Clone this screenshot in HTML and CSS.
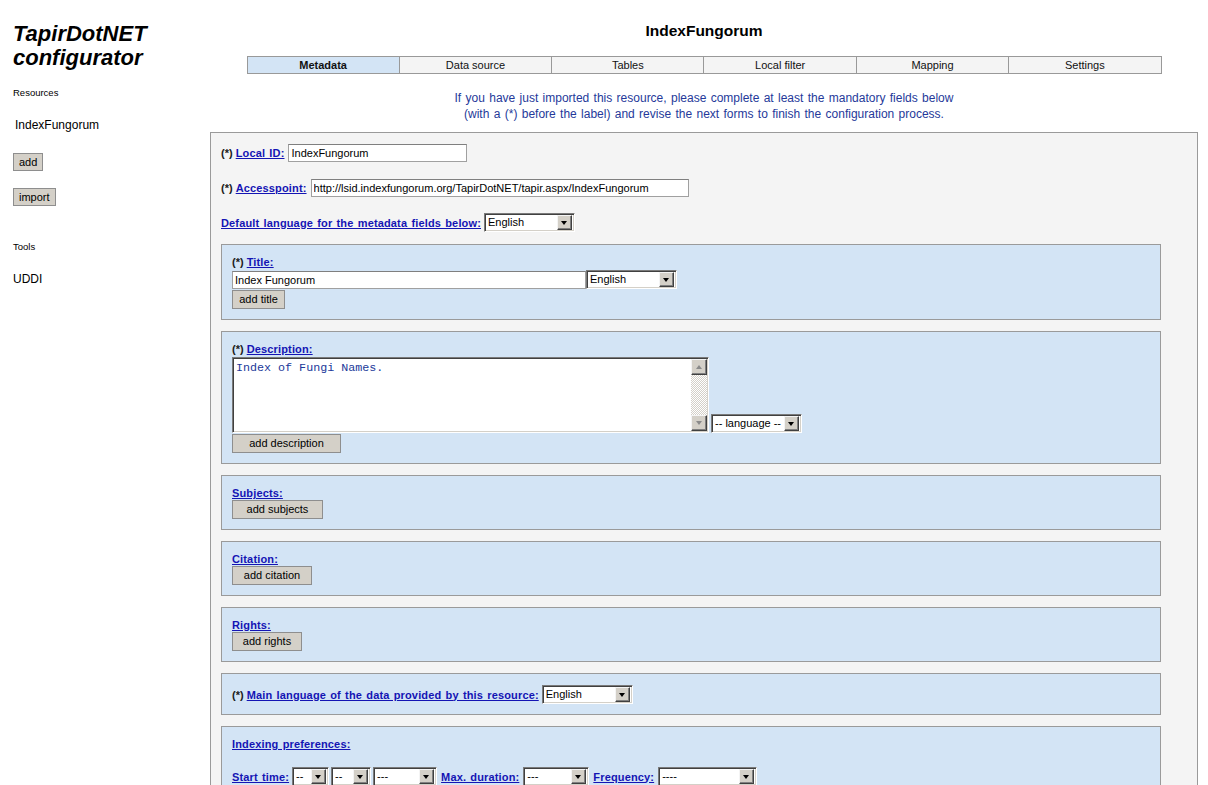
FILE: index.html
```html
<!DOCTYPE html>
<html>
<head>
<meta charset="utf-8">
<title>TapirDotNET configurator</title>
<link rel="stylesheet" href="styles.css">
</head>
<body>
<div class="page">
  <aside class="sidebar">
    <h1 class="app-title">TapirDotNET configurator</h1>
    <div class="side-heading">Resources</div>
    <div class="side-item side-item--res">IndexFungorum</div>
    <button class="btn btn--side">add</button>
    <button class="btn btn--side btn--import">import</button>
    <div class="side-heading side-heading--tools">Tools</div>
    <div class="side-item side-item--uddi">UDDI</div>
  </aside>

  <main class="main">
    <h2 class="res-title">IndexFungorum</h2>
    <nav class="tabs">
      <div class="tab tab--active">Metadata</div>
      <div class="tab">Data source</div>
      <div class="tab">Tables</div>
      <div class="tab">Local filter</div>
      <div class="tab">Mapping</div>
      <div class="tab">Settings</div>
    </nav>
    <p class="info">If you have just imported this resource, please complete at least the mandatory fields below<br>(with a (*) before the label) and revise the next forms to finish the configuration process.</p>

    <section class="panel">
      <div class="row row--first">
        <span class="req">(*)</span>&nbsp;<a class="lbl" href="#">Local ID:</a>
        <input class="txt txt--id" type="text" value="IndexFungorum">
      </div>
      <div class="row row--access">
        <span class="req">(*)</span>&nbsp;<a class="lbl" href="#">Accesspoint:</a>
        <input class="txt txt--access" type="text" value="http://lsid.indexfungorum.org/TapirDotNET/tapir.aspx/IndexFungorum">
      </div>
      <div class="row row--deflang">
        <a class="lbl" href="#">Default language for the metadata fields below:</a>
        <span class="sel sel--lang"><span class="sel-text">English</span><span class="sel-btn"></span></span>
      </div>

      <div class="box box--title">
        <div class="box-label"><span class="req">(*)</span> <a class="lbl" href="#">Title:</a></div>
        <div class="field-row">
          <input class="txt txt--title" type="text" value="Index Fungorum">
          <span class="sel sel--lang"><span class="sel-text">English</span><span class="sel-btn"></span></span>
        </div>
        <button class="btn btn--title">add title</button>
      </div>

      <div class="box box--desc">
        <div class="box-label"><span class="req">(*)</span> <a class="lbl" href="#">Description:</a></div>
        <div class="field-row field-row--bottom">
          <div class="area">
            <textarea class="area-text" spellcheck="false">Index of Fungi Names.</textarea>
            <div class="scroll">
              <span class="scroll-btn scroll-btn--up"></span>
              <span class="scroll-track"></span>
              <span class="scroll-btn scroll-btn--down"></span>
            </div>
          </div>
          <span class="sel sel--lang sel--language"><span class="sel-text">-- language --</span><span class="sel-btn"></span></span>
        </div>
        <button class="btn btn--desc">add description</button>
      </div>

      <div class="box">
        <div class="box-label"><a class="lbl" href="#">Subjects:</a></div>
        <button class="btn btn--subjects">add subjects</button>
      </div>

      <div class="box">
        <div class="box-label"><a class="lbl" href="#">Citation:</a></div>
        <button class="btn btn--citation">add citation</button>
      </div>

      <div class="box">
        <div class="box-label"><a class="lbl" href="#">Rights:</a></div>
        <button class="btn btn--rights">add rights</button>
      </div>

      <div class="box box--mainlang">
        <div class="inline-row">
          <span class="req">(*)</span>&nbsp;<a class="lbl" href="#">Main language of the data provided by this resource:</a>
          <span class="sel sel--lang"><span class="sel-text">English</span><span class="sel-btn"></span></span>
        </div>
      </div>

      <div class="box box--index">
        <div class="box-label"><a class="lbl" href="#">Indexing preferences:</a></div>
        <div class="inline-row inline-row--time">
          <a class="lbl" href="#">Start time:</a>
          <span class="sel sel--h"><span class="sel-text">--</span><span class="sel-btn"></span></span>
          <span class="sel sel--m"><span class="sel-text">--</span><span class="sel-btn"></span></span>
          <span class="sel sel--ampm"><span class="sel-text">---</span><span class="sel-btn"></span></span>
          <a class="lbl lbl--gap" href="#">Max. duration:</a>
          <span class="sel sel--dur"><span class="sel-text">---</span><span class="sel-btn"></span></span>
          <a class="lbl lbl--gap" href="#">Frequency:</a>
          <span class="sel sel--freq"><span class="sel-text">----</span><span class="sel-btn"></span></span>
        </div>
      </div>
    </section>
  </main>
</div>
</body>
</html>
```

FILE: styles.css
```css
* { box-sizing: border-box; }

html, body {
  margin: 0;
  padding: 0;
  background: #ffffff;
  font-family: "Liberation Sans", Arial, sans-serif;
  color: #000;
  overflow: hidden;
}

.page {
  display: flex;
  align-items: flex-start;
  width: 1208px;
  height: 785px;
}

/* ---------- sidebar ---------- */
.sidebar {
  width: 210px;
  flex: none;
  padding-left: 13px;
  display: flex;
  flex-direction: column;
  align-items: flex-start;
}

.app-title {
  margin: 22px 0 0 0;
  font-size: 22px;
  line-height: 24px;
  font-weight: bold;
  font-style: italic;
  width: 160px;
}

.side-heading {
  margin-top: 17px;
  font-size: 9.5px;
  line-height: 12px;
}

.side-heading--tools { margin-top: 35px; }

.side-item {
  font-size: 12px;
  line-height: 14px;
}

.side-item--res { margin-top: 19px; padding-left: 2px; }
.side-item--uddi { margin-top: 19px; }

/* ---------- buttons ---------- */
.btn {
  font-family: "Liberation Sans", Arial, sans-serif;
  font-size: 11px;
  height: 19px;
  padding: 0 6px;
  background: #d4d0c8;
  border: 1px solid #8e8e8e;
  color: #000;
  line-height: 17px;
  display: block;
}

.btn--side { margin-top: 21px; height: 18px; padding: 0 5px; }
.btn--import { margin-top: 17px; }

.btn--title { width: 53px; }
.btn--desc { width: 109px; margin-top: 1px; }
.btn--subjects { width: 91px; }
.btn--citation { width: 80px; }
.btn--rights { width: 70px; }

/* ---------- main ---------- */
.main {
  width: 988px;
  flex: none;
  display: flex;
  flex-direction: column;
  align-items: center;
}

.res-title {
  margin: 22px 0 0 0;
  font-size: 15.5px;
  line-height: 18px;
  font-weight: bold;
}

.tabs {
  margin-top: 16px;
  width: 915px;
  display: flex;
  border: 1px solid #999;
  background: #f4f4f4;
}

.tab {
  flex: 1;
  height: 16px;
  line-height: 16px;
  text-align: center;
  font-size: 11px;
  color: #111;
  border-left: 1px solid #999;
}

.tab:first-child { border-left: none; }

.tab--active {
  background: #d3e4f5;
  font-weight: bold;
}

.info {
  margin: 16px 0 0 0;
  font-size: 12px;
  line-height: 16px;
  text-align: center;
  color: #25399a;
  word-spacing: 1px;
}

/* ---------- panel ---------- */
.panel {
  margin-top: 10px;
  width: 988px;
  height: 700px;
  background: #f4f4f4;
  border: 1px solid #9a9a9a;
  border-bottom: none;
  padding: 0 0 0 10px;
}

.row {
  display: flex;
  align-items: center;
  font-size: 11px;
  height: 18px;
}

.row--first { margin-top: 11px; }
.row--access { margin-top: 17px; }
.row--deflang { margin-top: 16px; height: 19px; }

.req {
  font-weight: bold;
  color: #1a1a1a;
  font-size: 11px;
}

.lbl {
  font-weight: bold;
  color: #1414b4;
  text-decoration: underline;
  font-size: 11px;
  word-spacing: 1px;
  letter-spacing: 0.15px;
}

.lbl--gap { margin-left: 4px; }

.txt {
  height: 18px;
  border: 1px solid #a0a0a0;
  border-top-color: #7f7f7f;
  background: #fff;
  font-family: "Liberation Sans", Arial, sans-serif;
  font-size: 11px;
  padding: 0 2px;
  color: #000;
  outline: none;
}

.txt--id { width: 179px; margin-left: 4px; }
.txt--access { width: 378px; margin-left: 4px; }
.txt--title { width: 354px; }

/* select imitation */
.sel {
  display: inline-flex;
  align-items: center;
  height: 19px;
  background: #fff;
  border-top: 1px solid #7a7a7a;
  border-left: 1px solid #7a7a7a;
  border-right: 1px solid #fff;
  border-bottom: 1px solid #fff;
  box-shadow: inset 1px 1px 0 #404040, inset -1px -1px 0 #d4d0c8;
  padding: 2px 2px 2px 3px;
  font-size: 11px;
  color: #000;
  flex: none;
}

.sel-text {
  flex: 1;
  white-space: nowrap;
  overflow: hidden;
  line-height: 13px;
}

.sel-btn {
  width: 15px;
  height: 15px;
  flex: none;
  background: #d4d0c8;
  border-top: 1px solid #f4f4f4;
  border-left: 1px solid #f4f4f4;
  border-right: 1px solid #404040;
  border-bottom: 1px solid #404040;
  box-shadow: inset -1px -1px 0 #808080;
  position: relative;
}

.sel-btn::after {
  content: "";
  position: absolute;
  left: 3px;
  top: 5px;
  border-left: 3.5px solid transparent;
  border-right: 3.5px solid transparent;
  border-top: 4px solid #000;
}

.sel--lang { width: 91px; }
.row--deflang .sel--lang { margin-left: 3px; }
.sel--language { margin-left: 2px; width: 91px; }
.sel--h { width: 37px; margin-left: 3px; }
.sel--m { width: 40px; margin-left: 2px; }
.sel--ampm { width: 64px; margin-left: 2px; }
.sel--dur { width: 66px; margin-left: 4px; }
.sel--freq { width: 99px; margin-left: 4px; }

/* boxes */
.box {
  width: 940px;
  margin-top: 11px;
  background: #d3e4f5;
  border: 1px solid #9a9a9a;
  padding: 11px 10px 10px 10px;
  display: flex;
  flex-direction: column;
  align-items: flex-start;
}

.box--title { margin-top: 12px; }

.box-label {
  height: 13px;
  line-height: 13px;
  font-size: 11px;
}

.field-row {
  display: flex;
  align-items: center;
  margin-top: 1px;
}

.box--title .field-row { margin-top: 1px; margin-bottom: 1px; }

.field-row--bottom { align-items: flex-end; }

.inline-row {
  display: flex;
  align-items: center;
  height: 19px;
  font-size: 11px;
}

.box--mainlang .inline-row .sel { margin-left: 3px; }

.inline-row--time { margin-top: 16px; }

.box--index { padding-bottom: 20px; }

/* textarea imitation */
.area {
  display: flex;
  width: 477px;
  height: 76px;
  border-top: 1px solid #7a7a7a;
  border-left: 1px solid #7a7a7a;
  border-right: 1px solid #fff;
  border-bottom: 1px solid #fff;
  box-shadow: inset 1px 1px 0 #404040, inset -1px -1px 0 #d4d0c8;
  background: #fff;
  padding: 1px 1px 1px 1px;
}

.area-text {
  flex: 1;
  border: none;
  outline: none;
  resize: none;
  overflow: hidden;
  font-family: "Liberation Mono", "Courier New", monospace;
  font-size: 11.7px;
  line-height: 13px;
  color: #21399a;
  padding: 3px 2px;
  background: #fff;
}

.scroll {
  width: 16px;
  display: flex;
  flex-direction: column;
  flex: none;
}

.scroll-track {
  flex: 1;
  background: repeating-conic-gradient(#d4d0c8 0 25%, #ffffff 0 50%) 0 0 / 2px 2px;
}

.scroll-btn {
  height: 16px;
  background: #d4d0c8;
  border-top: 1px solid #f4f4f4;
  border-left: 1px solid #f4f4f4;
  border-right: 1px solid #404040;
  border-bottom: 1px solid #404040;
  box-shadow: inset -1px -1px 0 #808080;
  position: relative;
  flex: none;
}

.scroll-btn::after {
  content: "";
  position: absolute;
  left: 4px;
  top: 5px;
  border-left: 3.5px solid transparent;
  border-right: 3.5px solid transparent;
}

.scroll-btn--up::after { border-bottom: 4px solid #8a8a8a; }
.scroll-btn--down::after { border-top: 4px solid #8a8a8a; }
```
